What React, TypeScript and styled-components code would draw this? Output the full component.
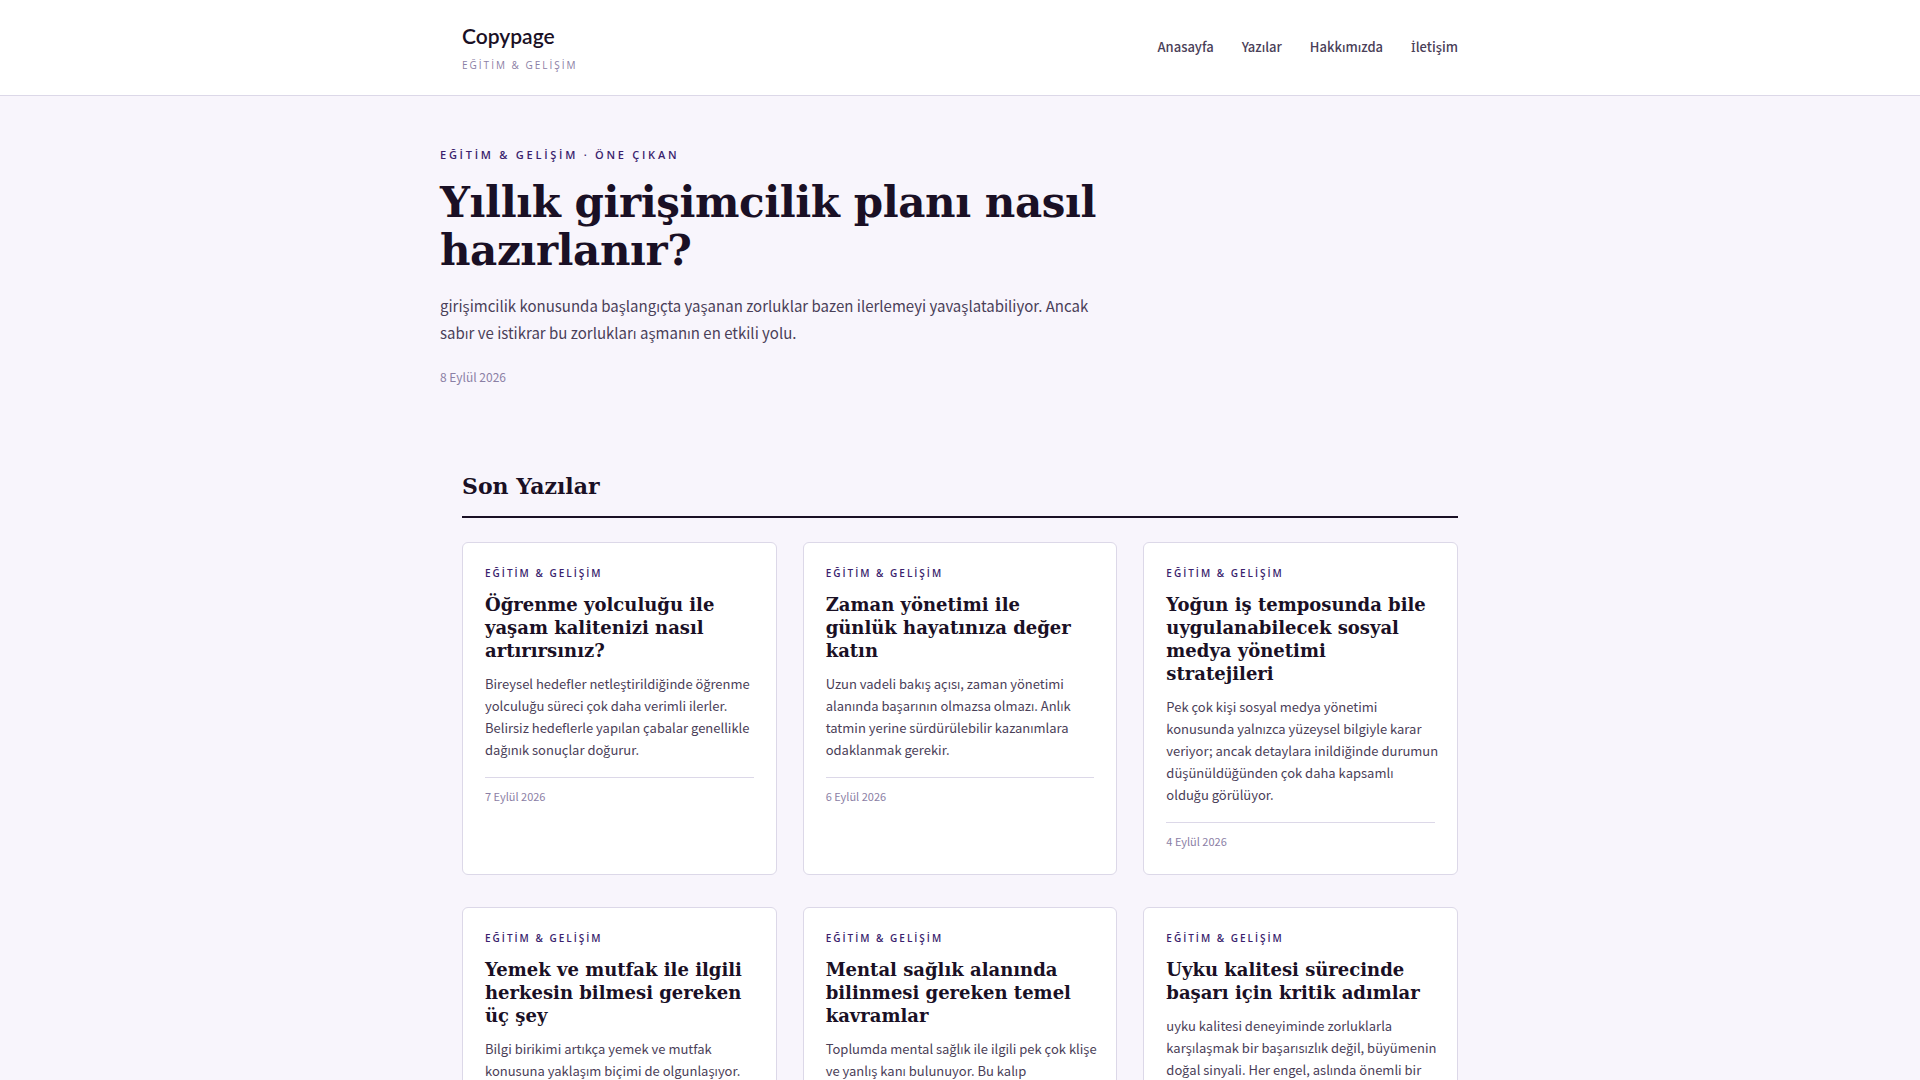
import React from "react";
import styled, { createGlobalStyle } from "styled-components";

const color = {
  page: "#f8f5fc",
  surface: "#ffffff",
  ink: "#1a1025",
  body: "#4a4058",
  muted: "#8b80a5",
  accent: "#3b1f6e",
  line: "#dcd8e8",
};

const sans = `"Noto Sans CJK SC", "Open Sans", sans-serif`;
const navSans = `"Noto Sans CJK SC", "Noto Sans", sans-serif`;
const label = `"Open Sans", "Noto Sans", sans-serif`;
const serif = `"DejaVu Serif", serif`;

const GlobalStyle = createGlobalStyle`
  *, *::before, *::after { box-sizing: border-box; }
  body {
    margin: 0;
    background: ${color.page};
    color: ${color.ink};
    font-family: ${sans};
  }
  h1, h2, h3, p { margin: 0; }
  a { color: inherit; text-decoration: none; }
`;

const Container = styled.div`
  max-width: 1040px;
  margin: 0 auto;
  padding: 0 22px;
`;

const Header = styled.header`
  background: ${color.surface};
  border-bottom: 1px solid ${color.line};
`;

const HeaderRow = styled(Container)`
  display: flex;
  align-items: center;
  justify-content: space-between;
  padding-top: 22px;
  padding-bottom: 22px;
`;

const Logo = styled.a`
  display: block;
  font-family: Lato, sans-serif;
  font-size: 21px;
  font-weight: 600;
  line-height: 28px;
`;

const Tagline = styled.span`
  display: block;
  margin-top: 7px;
  font-family: ${label};
  font-size: 10px;
  line-height: 16px;
  letter-spacing: 2px;
  color: ${color.muted};
`;

const Nav = styled.nav`
  display: flex;
  gap: 28px;
  padding-bottom: 2px;
  font-family: ${navSans};
  font-size: 13px;
  font-weight: 500;
  line-height: 22px;
  color: ${color.body};
`;

const DottedI = styled.span`
  font-family: "Noto Sans", sans-serif;
`;

const Hero = styled.section`
  max-width: 1040px;
  margin: 0 auto;
  padding: 48px 0 84px;
`;

const HeroText = styled.div`
  max-width: 680px;
`;

const Kicker = styled.p<{ $large?: boolean }>`
  font-family: ${label};
  font-size: ${(p) => (p.$large ? 11 : 10)}px;
  font-weight: 600;
  line-height: ${(p) => (p.$large ? 22 : 16)}px;
  letter-spacing: ${(p) => (p.$large ? "0.25em" : "0.2em")};
  color: ${color.accent};
`;

const HeroTitle = styled.h1`
  margin-top: 13px;
  font-family: ${serif};
  font-size: 42px;
  font-weight: 700;
  line-height: 48px;
  letter-spacing: -0.01em;
`;

const HeroLead = styled.p`
  margin-top: 17px;
  font-size: 15px;
  line-height: 27px;
  color: ${color.body};
`;

const DateText = styled.time<{ $large?: boolean }>`
  display: block;
  font-size: ${(p) => (p.$large ? 12 : 11)}px;
  line-height: ${(p) => (p.$large ? 20 : 18)}px;
  color: ${color.muted};
`;

const HeroDate = styled(DateText)`
  margin-top: 21px;
`;

const SectionTitle = styled.h2`
  margin-bottom: 24px;
  padding-bottom: 15px;
  border-bottom: 2px solid ${color.ink};
  font-family: ${serif};
  font-size: 22px;
  font-weight: 700;
  line-height: 30px;
`;

const Grid = styled.div`
  display: grid;
  grid-template-columns: repeat(3, minmax(0, 1fr));
  gap: 32px 26px;
  padding-bottom: 64px;
`;

const Card = styled.article`
  padding: 22px 22px 24px;
  background: ${color.surface};
  border: 1px solid ${color.line};
  border-radius: 6px;
`;

const CardTitle = styled.h3`
  margin-top: 12px;
  font-family: ${serif};
  font-size: 18px;
  font-weight: 700;
  line-height: 23px;
`;

const CardText = styled.p`
  margin-top: 11px;
  margin-right: -8px;
  font-size: 13px;
  line-height: 22px;
  color: ${color.body};
`;

const CardFooter = styled.footer`
  margin-top: 16px;
  padding-top: 9px;
  border-top: 1px solid ${color.line};
`;

const category = "EĞİTİM & GELİŞİM";
const links = ["Anasayfa", "Yazılar", "Hakkımızda", "İletişim"];

type Post = { title: string; text: string; date?: string };

const posts: Post[] = [
  {
    title: "Öğrenme yolculuğu ile yaşam kalitenizi nasıl artırırsınız?",
    text: "Bireysel hedefler netleştirildiğinde öğrenme yolculuğu süreci çok daha verimli ilerler. Belirsiz hedeflerle yapılan çabalar genellikle dağınık sonuçlar doğurur.",
    date: "7 Eylül 2026",
  },
  {
    title: "Zaman yönetimi ile günlük hayatınıza değer katın",
    text: "Uzun vadeli bakış açısı, zaman yönetimi alanında başarının olmazsa olmazı. Anlık tatmin yerine sürdürülebilir kazanımlara odaklanmak gerekir.",
    date: "6 Eylül 2026",
  },
  {
    title: "Yoğun iş temposunda bile uygulanabilecek sosyal medya yönetimi stratejileri",
    text: "Pek çok kişi sosyal medya yönetimi konusunda yalnızca yüzeysel bilgiyle karar veriyor; ancak detaylara inildiğinde durumun düşünüldüğünden çok daha kapsamlı olduğu\u00a0görülüyor.",
    date: "4 Eylül 2026",
  },
  {
    title: "Yemek ve mutfak ile ilgili herkesin bilmesi gereken üç şey",
    text: "Bilgi birikimi artıkça yemek ve mutfak konusuna yaklaşım biçimi de olgunlaşıyor.",
  },
  {
    title: "Mental sağlık alanında bilinmesi gereken temel kavramlar",
    text: "Toplumda mental sağlık ile ilgili pek çok klişe ve yanlış kanı bulunuyor. Bu kalıp",
  },
  {
    title: "Uyku kalitesi sürecinde başarı için kritik adımlar",
    text: "uyku kalitesi deneyiminde zorluklarla karşılaşmak bir başarısızlık değil, büyümenin doğal sinyali. Her engel, aslında önemli bir",
  },
];

function NavLink({ text }: { text: string }) {
  const dotted = text.startsWith("İ");
  return (
    <a href="#">
      {dotted && <DottedI>İ</DottedI>}
      {dotted ? text.slice(1) : text}
    </a>
  );
}

export default function App() {
  return (
    <>
      <GlobalStyle />
      <Header>
        <HeaderRow>
          <div>
            <Logo href="#">Copypage</Logo>
            <Tagline>{category}</Tagline>
          </div>
          <Nav>
            {links.map((text) => (
              <NavLink key={text} text={text} />
            ))}
          </Nav>
        </HeaderRow>
      </Header>
      <main>
        <Hero>
          <HeroText>
            <Kicker $large>{category} · ÖNE ÇIKAN</Kicker>
            <HeroTitle>
              <a href="#">Yıllık girişimcilik planı nasıl hazırlanır?</a>
            </HeroTitle>
            <HeroLead>
              girişimcilik konusunda başlangıçta yaşanan zorluklar bazen ilerlemeyi yavaşlatabiliyor. Ancak sabır ve
              istikrar bu zorlukları aşmanın en etkili yolu.
            </HeroLead>
            <HeroDate $large>8 Eylül 2026</HeroDate>
          </HeroText>
        </Hero>
        <Container>
          <SectionTitle>Son Yazılar</SectionTitle>
          <Grid>
            {posts.map((post) => (
              <Card key={post.title}>
                <Kicker>{category}</Kicker>
                <CardTitle>
                  <a href="#">{post.title}</a>
                </CardTitle>
                <CardText>{post.text}</CardText>
                {post.date && (
                  <CardFooter>
                    <DateText>{post.date}</DateText>
                  </CardFooter>
                )}
              </Card>
            ))}
          </Grid>
        </Container>
      </main>
    </>
  );
}
